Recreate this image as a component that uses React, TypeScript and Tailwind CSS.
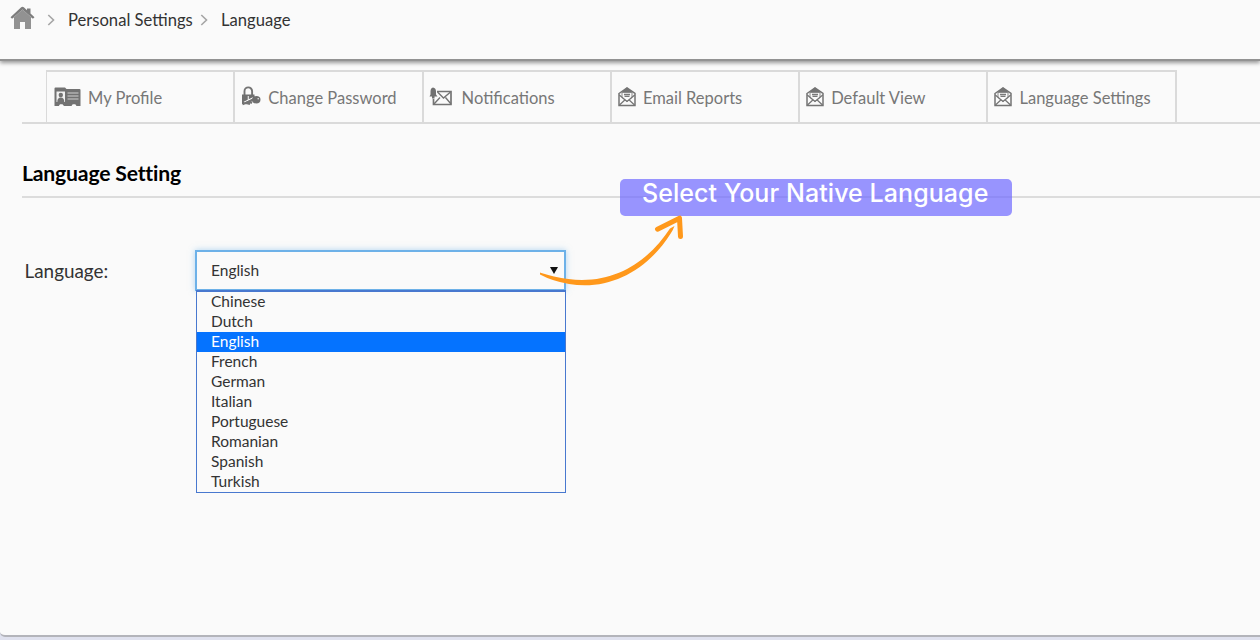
import React from "react";

const languages = [
  "Chinese",
  "Dutch",
  "English",
  "French",
  "German",
  "Italian",
  "Portuguese",
  "Romanian",
  "Spanish",
  "Turkish",
];

function HomeIcon() {
  return (
    <svg className="h-[24px] w-[25px] shrink-0" viewBox="0 0 25 24">
      <path d="M4 12 12.5 4 21 12v11h-6v-7h-5v7H4z" fill="#929292" />
      <path d="M0.5 11.2 11.2 1.2q1.3-1 2.6 0l3.2 3V2.5h3.5v5l4 3.7-1.6 1.6L12.5 3.6 2.1 12.8z" fill="#7c7c7c" />
      <path d="M3 12 12.500 3.400 22 12z" fill="#929292" />
    </svg>
  );
}

function Chevron() {
  return (
    <svg className="h-3 w-2 shrink-0" viewBox="0 0 8 12" fill="none" stroke="#a5a5a5" strokeWidth="1.6">
      <path d="M1.3 1 6.5 6 1.3 11" />
    </svg>
  );
}

function ProfileIcon() {
  return (
    <svg className="h-5 w-[27px] shrink-0" viewBox="0 0 27 20">
      <path
        d="M1.5 0.5h9.5l1.5 1.5h13q1 0 1 1v16h-4l-1.2-1.7h-2.6L17.5 19h-7.500L8.500 17.300H6L4.800 19H0.500V1.500q0-1 1-1z"
        fill="#727272"
      />
      <path d="M2.500 4.500h8.500v10.500H2.500z" fill="#f1f1f1" />
      <circle cx="6.800" cy="8" r="2.200" fill="#727272" />
      <path d="M3.300 15q0-4.500 3.500-4.500T10.300 15z" fill="#727272" />
      <path d="M13.500 6H24.500M13.500 9H24.500M13.500 12H24.500" stroke="#cfcfcf" strokeWidth="1.100" />
    </svg>
  );
}

function LockIcon() {
  return (
    <svg className="-mt-[3px] h-5 w-5 shrink-0" viewBox="0 0 20 20">
      <path d="M3.500 9V5.200a3.800 3.800 0 0 1 7.600 0V9" fill="none" stroke="#747474" strokeWidth="1.900" />
      <path d="M1 8.500h12.500v4L9 16l-5 2H1z" fill="#707070" />
      <path d="M7.300 10v4" stroke="#e5e5e5" strokeWidth="1.200" />
      <path d="M3 16.300 12 11.800" stroke="#fafafa" strokeWidth="1.200" />
      <path d="M1.500 18.200 12 14M5 17l4 1M8 15.500l3 1.500" stroke="#747474" strokeWidth="2" />
      <ellipse cx="15.300" cy="13.700" rx="4.200" ry="3.700" fill="#707070" />
      <circle cx="17.200" cy="12.700" r="0.800" fill="#ececec" />
    </svg>
  );
}

function NotifyIcon() {
  return (
    <svg className="h-5 w-6 shrink-0" viewBox="0 0 24 20" fill="none">
      <path d="M8 4.500h14v13H4.500V12" stroke="#747474" strokeWidth="1.700" />
      <path d="m8.500 5 6 6 7-6M5 17l6-6.500M22 17l-5.500-6.500" stroke="#747474" strokeWidth="1.400" />
      <path d="M4 0.500q3 .5 3 4v3l1.500 2H0.500l1-2v-3q0-3.500 2.500-4z" fill="#707070" />
      <path d="M3 9h2.500v2.500H3z" fill="#707070" />
    </svg>
  );
}

function MailIcon() {
  return (
    <svg className="h-5 w-[18px] shrink-0" viewBox="0 0 18 20" fill="none">
      <path d="M1 6.500 9 1l8 5.500v12H1z" stroke="#747474" strokeWidth="1.500" />
      <path d="M3 5.500 9 0.500l6 5z" fill="#747474" />
      <path d="M4 5.500h10v5l-5 4-5-4z" fill="#fafafa" stroke="#8a8a8a" strokeWidth="1" />
      <path d="M6 7.500h6M6.500 9.300h5" stroke="#7a7a7a" strokeWidth="1.300" />
      <path d="m1.300 8 7.700 6.500L16.700 8M1.500 18l5.300-5M16.500 18l-5.300-5" stroke="#747474" strokeWidth="1.200" />
    </svg>
  );
}

const tabs = [
  { label: "My Profile", icon: <ProfileIcon />, pad: "pl-[7px] gap-[7px]" },
  { label: "Change Password", icon: <LockIcon />, pad: "pl-[6px] gap-[7px]" },
  { label: "Notifications", icon: <NotifyIcon />, pad: "pl-[5px] gap-[9px]" },
  { label: "Email Reports", icon: <MailIcon />, pad: "pl-[6px] gap-[7px]" },
  { label: "Default View", icon: <MailIcon />, pad: "pl-[6px] gap-[7px]" },
  { label: "Language Settings", icon: <MailIcon />, pad: "pl-[6px] gap-[7px]" },
];

export default function App() {
  return (
    <div className="h-[640px] w-[1260px] overflow-hidden bg-[#dfe1ee] font-['Lato',sans-serif]">
      <div className="relative flex h-[637px] flex-col rounded-bl-[5px] border-b-2 border-[#b3b4ba] bg-[#fafafa]">
        <header className="h-[61px] shrink-0 border-b-2 border-[#929292] shadow-[0_2px_4px_rgba(0,0,0,0.4)]">
          <nav className="flex h-10 items-center pl-[10px] text-[16.600px] text-[#333]">
            <div className="-mt-[5px]">
              <HomeIcon />
            </div>
            <div className="ml-[12px]">
              <Chevron />
            </div>
            <span className="ml-[13px] w-[125px] whitespace-nowrap">Personal Settings</span>
            <div className="ml-[7px]">
              <Chevron />
            </div>
            <span className="ml-[13px] whitespace-nowrap">Language</span>
          </nav>
        </header>

        <div className="ml-[22px] mt-[9px] flex h-[54px] shrink-0 border-b-2 border-[#dadada] pl-6">
          <div className="flex h-[54px] border-l border-t-2 border-[#dadada]">
            {tabs.map((tab) => (
              <div
                key={tab.label}
                className={
                  "flex w-[188.300px] items-center border-r-2 border-[#dadada] pb-[2px] text-[16.500px] text-[#777] " +
                  tab.pad
                }
              >
                {tab.icon}
                <span className="whitespace-nowrap pt-[2px]">{tab.label}</span>
              </div>
            ))}
          </div>
        </div>

        <h1 className="ml-[22px] mt-[35px] h-[39px] shrink-0 border-b-2 border-[#dcdcdc] text-[21.200px] font-bold leading-[28px] tracking-[-0.200px] text-black">
          Language Setting
        </h1>

        <div className="mt-[52px] flex">
          <label className="w-[195px] pl-[24.500px] text-[18.900px] leading-[42px] text-[#333]">Language:</label>
          <div className="w-[371px] text-[15.500px] text-[#333]">
            <div className="flex h-[41px] items-center justify-between border-2 border-[#6db1e8] pl-[14px] pr-[6px] shadow-[0_0_6px_rgba(102,175,233,0.500)]">
              <span>English</span>
              <svg className="h-[7px] w-[8px]" viewBox="0 0 8 7">
                <path d="M0 0h8L4 7z" fill="#111" />
              </svg>
            </div>
            <ul className="-mt-px ml-px border border-t-2 border-[#4878cf] bg-[#fafafa]">
              {languages.map((name) => (
                <li
                  key={name}
                  className={
                    name === "English"
                      ? "h-5 bg-[#0573ff] pl-[14px] leading-[19px] text-white"
                      : "h-5 pl-[14px] leading-[19px]"
                  }
                >
                  {name}
                </li>
              ))}
            </ul>
          </div>
        </div>

        <div className="absolute left-[620px] top-[179px] flex h-[37px] w-[392px] items-start rounded-[5px] bg-[#6e68ff]/70 pl-[22px] font-['Inter',sans-serif] text-[25px] font-medium leading-[29px] tracking-[0.070px] text-white">
          <span className="whitespace-nowrap">Select Your Native Language</span>
        </div>
        <svg className="absolute left-[530px] top-[205px] h-[90px] w-[170px]" viewBox="530 205 170 90">
          <path
            d="M540 272.500Q541 273 554 276.500C610 290 648 262 670 228.500L674.500 226Q673 230 671 233C648 270 610 291 569 284Q552 281 540 274.500Z"
            fill="#ff981b"
          />
          <path
            d="M657.500 229.200 679.500 218.200 680.500 236.500"
            fill="none"
            stroke="#ff981b"
            strokeWidth="5"
            strokeLinecap="round"
            strokeLinejoin="round"
          />
        </svg>
      </div>
    </div>
  );
}
